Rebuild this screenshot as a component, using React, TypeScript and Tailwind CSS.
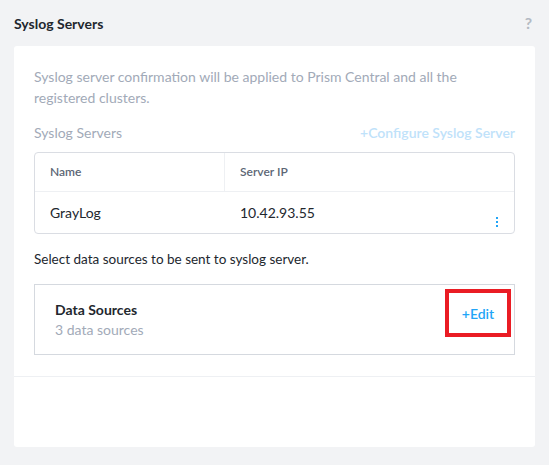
export default function App() {
  return (
    <main className="w-[549px] h-[465px] bg-[#f2f3f5] px-[14px] pt-[13px] font-['Lato',sans-serif] text-[14px]">
      <div className="flex items-center justify-between h-[20px] mb-[13px]">
        <h1 className="font-bold text-[14px] text-[#22272e]">Syslog Servers</h1>
        <span className="text-[#b4bac3] text-[16px] font-bold mr-[3px]">?</span>
      </div>
      <div className="bg-white rounded-[3px] h-[401px] flex flex-col">
        <div className="px-[20px] pt-[20px] pb-[21px] border-b border-[#eef0f3]">
          <p className="text-[#a2aab8] leading-[21px] w-[440px]">
            Syslog server confirmation will be applied to Prism Central and all the registered clusters.
          </p>
          <div className="flex items-center justify-between mt-[14px] mb-[9px]">
            <span className="text-[#a2aab8]">Syslog Servers</span>
            <span className="text-[#bfe2fa] font-semibold">+Configure Syslog Server</span>
          </div>
          <div className="border border-[#dadde3] rounded-[4px]">
            <div className="flex h-[39px] items-center border-b border-[#eef0f3] text-[12px] text-[#5c6675] font-semibold">
              <div className="w-[190px] h-full flex items-center pl-[15px] border-r border-[#eef0f3]">Name</div>
              <div className="pl-[15px]">Server IP</div>
            </div>
            <div className="flex h-[41px] relative">
              <div className="w-[190px] pl-[15px] pt-[10px] text-[#22272e]">GrayLog</div>
              <div className="pl-[15px] pt-[10px] text-[#22272e]">10.42.93.55</div>
              <div className="absolute right-[16px] top-[25px] flex flex-col gap-[2px]">
                <span className="w-[2px] h-[2px] bg-[#22a5f7]" />
                <span className="w-[2px] h-[2px] bg-[#22a5f7]" />
                <span className="w-[2px] h-[2px] bg-[#22a5f7]" />
              </div>
            </div>
          </div>
          <p className="text-[#22272e] text-[13.5px] mt-[15px]">Select data sources to be sent to syslog server.</p>
          <div className="mt-[15px] border border-[#d5d9df] h-[71px] flex items-center justify-between pl-[20px] pr-[3px]">
            <div className="flex flex-col">
              <span className="font-bold text-[#22272e] leading-[20px]">Data Sources</span>
              <span className="text-[#a2aab8] leading-[20px]">3 data sources</span>
            </div>
            <div className="w-[66px] h-[48px] border-[4px] border-[#ea1c24] flex items-center justify-center -mt-[13px]">
              <span className="text-[#22a5f7] font-semibold">+Edit</span>
            </div>
          </div>
        </div>
      </div>
    </main>
  );
}
